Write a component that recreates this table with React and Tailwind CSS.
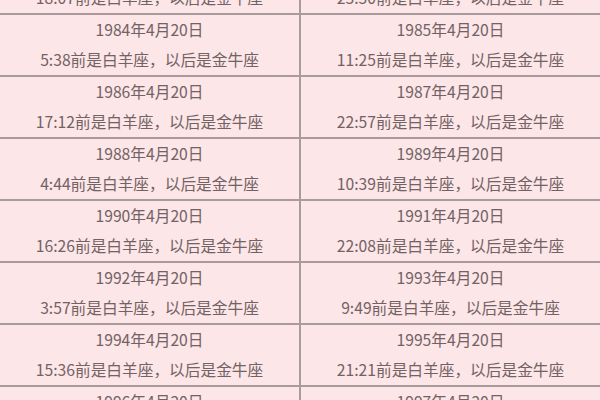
import React from 'react';

const rows = [
  ['1982年4月20日', '18:07', '1983年4月20日', '23:50'],
  ['1984年4月20日', '5:38', '1985年4月20日', '11:25'],
  ['1986年4月20日', '17:12', '1987年4月20日', '22:57'],
  ['1988年4月20日', '4:44', '1989年4月20日', '10:39'],
  ['1990年4月20日', '16:26', '1991年4月20日', '22:08'],
  ['1992年4月20日', '3:57', '1993年4月20日', '9:49'],
  ['1994年4月20日', '15:36', '1995年4月20日', '21:21'],
  ['1996年4月20日', '3:24', '1997年4月20日', '9:16'],
];

const Cell = ({ date, time, divider }) => (
  <div className={`flex flex-col items-center justify-center leading-[30px] ${divider ? 'border-r-2 border-[#a99b9d]' : ''}`}>
    <span>{date}</span>
    <span>{time}前是白羊座，以后是金牛座</span>
  </div>
);

const App = () => {
  return (
    <div
      className="w-[600px] h-[400px] overflow-hidden bg-[#fce6e8] text-[15.7px] text-[#726264]"
      style={{ fontFamily: '"Noto Sans CJK SC", "Noto Sans", sans-serif' }}
    >
      <div className="-mt-[47px]">
        {rows.map(([d1, t1, d2, t2]) => (
          <div key={d1} className="grid grid-cols-[301px_1fr] h-[62px] border-b-2 border-[#a99b9d]">
            <Cell date={d1} time={t1} divider />
            <Cell date={d2} time={t2} />
          </div>
        ))}
      </div>
    </div>
  );
};

export default App;
